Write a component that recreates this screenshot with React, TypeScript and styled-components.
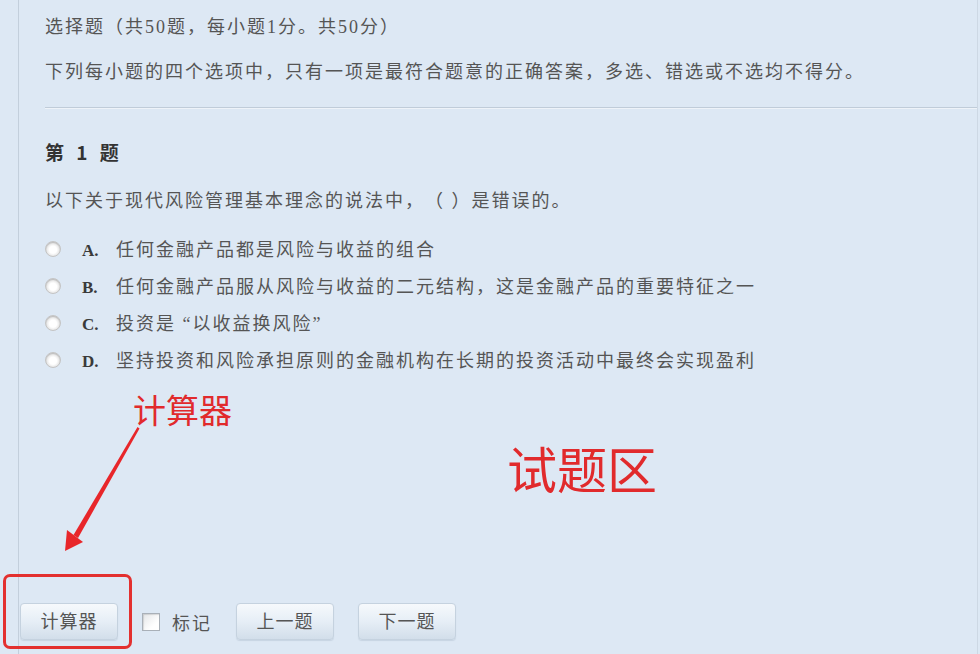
import React from "react";
import styled, { createGlobalStyle } from "styled-components";

const GlobalStyle = createGlobalStyle`
  html, body { margin: 0; padding: 0; background: #dde8f4; }
  body {
    font-family: "Liberation Serif", "Noto Sans CJK SC", serif;
    text-spacing-trim: space-all;
  }
  * { box-sizing: border-box; }
`;

const Page = styled.div`
  position: relative;
  width: 980px;
  height: 654px;
  overflow: hidden;
  display: flex;
  background: #dde8f4;
`;

const Gutter = styled.div`
  width: 18px;
  flex: none;
`;

const Panel = styled.div`
  flex: 1;
  margin-right: 2px;
  border-left: 1px solid #c3cfdc;
  border-right: 1px solid #cdd8e4;
  display: flex;
  flex-direction: column;
`;

const Content = styled.div`
  padding-left: 26px;
  display: flex;
  flex-direction: column;
`;

const Line = styled.div<{ $mt: number }>`
  margin-top: ${(p) => p.$mt}px;
  font-size: 18px;
  line-height: 30px;
  letter-spacing: 2px;
  color: #555;
  white-space: nowrap;
  text-spacing-trim: space-all;
`;

const Divider = styled.div`
  margin-top: 20px;
  height: 1px;
  background: #c0ccd9;
  box-shadow: 0 1px 0 #eef3f9;
`;

const Title = styled.div`
  margin-top: 29px;
  font-family: "Noto Sans CJK SC", sans-serif;
  font-weight: 700;
  font-size: 19px;
  line-height: 30px;
  color: #333;
  word-spacing: 8px;
`;

const Options = styled.div`
  margin-top: 14px;
  display: flex;
  flex-direction: column;
`;

const Option = styled.label`
  height: 37px;
  display: flex;
  align-items: center;
`;

const Radio = styled.span`
  width: 16px;
  height: 16px;
  border-radius: 50%;
  flex: none;
  border: 1px solid #c4c4c4;
  background: radial-gradient(circle at 50% 55%, #ffffff 0 35%, #e8e8e8 60%, #b9b9b9 100%);
  box-shadow: inset 0 1px 1px rgba(0, 0, 0, 0.15);
`;

const OptionBody = styled.span`
  margin-left: 21px;
  padding-top: 3px;
  display: flex;
  align-items: baseline;
  line-height: 30px;
`;

const Letter = styled.span`
  width: 34px;
  font-family: "Liberation Serif", serif;
  font-weight: 700;
  font-size: 17px;
  color: #3a3a3a;
`;

const OptionText = styled.span`
  font-size: 18px;
  letter-spacing: 2px;
  color: #555;
  white-space: nowrap;
  text-spacing-trim: space-all;
`;

const Footer = styled.div`
  margin-top: auto;
  padding: 0 0 14px 1px;
  display: flex;
  align-items: center;
`;

const Button = styled.button<{ $ml?: number }>`
  margin-left: ${(p) => p.$ml ?? 0}px;
  width: 98px;
  height: 37px;
  border: 1px solid #c5d2df;
  border-radius: 4px;
  background: linear-gradient(#f6f9fc, #e6eef6 50%, #d2deea);
  box-shadow: 0 1px 1px rgba(80, 100, 130, 0.15);
  font-family: "Noto Sans CJK SC", sans-serif;
  font-size: 18px;
  line-height: 1;
  letter-spacing: 1px;
  color: #555;
  padding: 0 0 3px;
`;

const Check = styled.span`
  margin-left: 24px;
  width: 18px;
  height: 18px;
  border: 1px solid #a9b0b8;
  background: linear-gradient(135deg, #e4e6e8, #ffffff 70%);
  box-shadow: inset 1px 1px 1px rgba(0, 0, 0, 0.12);
`;

const CheckLabel = styled.span`
  margin-left: 12px;
  font-family: "Noto Sans CJK SC", sans-serif;
  font-size: 18px;
  letter-spacing: 2px;
  color: #555;
`;

const Annotation = styled.div<{ $size: number }>`
  position: absolute;
  font-family: "Noto Sans CJK SC", sans-serif;
  font-size: ${(p) => p.$size}px;
  line-height: 1;
  color: #e12a2c;
  white-space: nowrap;
`;

const CalcNote = styled(Annotation)`
  left: 133px;
  top: 393px;
`;

const AreaNote = styled(Annotation)`
  left: 507px;
  top: 442px;
`;

const ArrowSvg = styled.svg`
  position: absolute;
  left: 55px;
  top: 420px;
`;

const Highlight = styled.div`
  position: absolute;
  left: 3px;
  top: 574px;
  width: 129px;
  height: 75px;
  border: 3px solid #e3302f;
  border-radius: 7px;
`;

const options = [
  ["A.", "任何金融产品都是风险与收益的组合"],
  ["B.", "任何金融产品服从风险与收益的二元结构，这是金融产品的重要特征之一"],
  ["C.", "投资是 “以收益换风险”"],
  ["D.", "坚持投资和风险承担原则的金融机构在长期的投资活动中最终会实现盈利"],
];

export default function App() {
  return (
    <>
      <GlobalStyle />
      <Page>
        <Gutter />
        <Panel>
          <Content>
            <Line $mt={12}>选择题（共50题，每小题1分。共50分）</Line>
            <Line $mt={15}>下列每小题的四个选项中，只有一项是最符合题意的正确答案，多选、错选或不选均不得分。</Line>
            <Divider />
            <Title>第 1 题</Title>
            <Line $mt={19}>以下关于现代风险管理基本理念的说法中，（ ）是错误的。</Line>
            <Options>
              {options.map(([k, t]) => (
                <Option key={k}>
                  <Radio />
                  <OptionBody>
                    <Letter>{k}</Letter>
                    <OptionText>{t}</OptionText>
                  </OptionBody>
                </Option>
              ))}
            </Options>
          </Content>
          <Footer>
            <Button>计算器</Button>
            <Check />
            <CheckLabel>标记</CheckLabel>
            <Button $ml={24}>上一题</Button>
            <Button $ml={24}>下一题</Button>
          </Footer>
        </Panel>
        <CalcNote $size={33}>计算器</CalcNote>
        <ArrowSvg width="95" height="140" viewBox="0 0 95 140">
          <polygon points="82.5,7 84.5,8.5 23,118 18.5,115" fill="#e8262a" />
          <polygon points="10,131 12,110 28,122" fill="#e8262a" />
        </ArrowSvg>
        <AreaNote $size={50}>试题区</AreaNote>
        <Highlight />
      </Page>
    </>
  );
}
